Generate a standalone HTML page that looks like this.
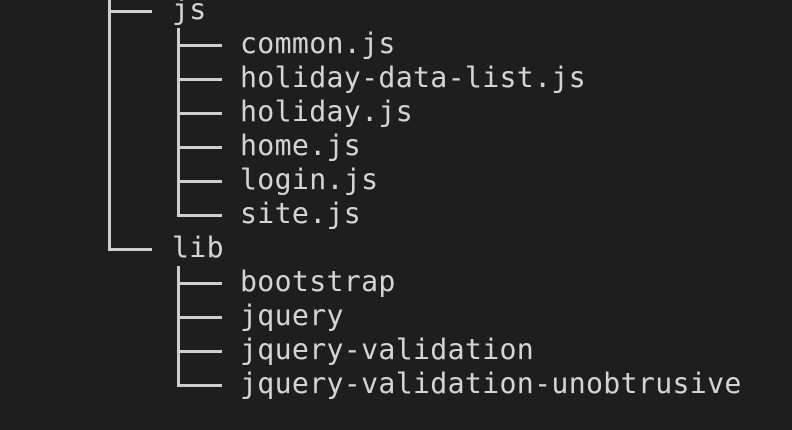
<!DOCTYPE html>
<html><head><style>
html,body{margin:0;padding:0;background:#1e1e1e;width:792px;height:430px;overflow:hidden}
.t{position:absolute;font-family:"DejaVu Sans Mono","Liberation Mono",monospace;font-size:28.2px;line-height:34px;color:#d4d4d4;white-space:pre;letter-spacing:0.33px;margin-top:-1px}
.l{position:absolute;background:#cfcfcf}
</style></head><body>
<div class="l" style="left:108px;top:0;width:2.5px;height:250px"></div>
<div class="l" style="left:108px;top:10px;width:44px;height:2.5px"></div>
<div class="l" style="left:108px;top:248px;width:44px;height:2.5px"></div>
<div class="l" style="left:177px;top:28px;width:2.5px;height:189px"></div>
<div class="l" style="left:177px;top:266px;width:2.5px;height:121px"></div>
<div class="l" style="left:177px;top:44px;width:45px;height:2.5px"></div>
<div class="l" style="left:177px;top:78px;width:45px;height:2.5px"></div>
<div class="l" style="left:177px;top:112px;width:45px;height:2.5px"></div>
<div class="l" style="left:177px;top:146px;width:45px;height:2.5px"></div>
<div class="l" style="left:177px;top:180px;width:45px;height:2.5px"></div>
<div class="l" style="left:177px;top:214px;width:45px;height:2.5px"></div>
<div class="l" style="left:177px;top:282px;width:45px;height:2.5px"></div>
<div class="l" style="left:177px;top:316px;width:45px;height:2.5px"></div>
<div class="l" style="left:177px;top:350px;width:45px;height:2.5px"></div>
<div class="l" style="left:177px;top:384px;width:45px;height:2.5px"></div>
<div class="t" style="left:172px;top:-6px">js</div>
<div class="t" style="left:240px;top:28px">common.js</div>
<div class="t" style="left:240px;top:62px">holiday-data-list.js</div>
<div class="t" style="left:240px;top:96px">holiday.js</div>
<div class="t" style="left:240px;top:130px">home.js</div>
<div class="t" style="left:240px;top:164px">login.js</div>
<div class="t" style="left:240px;top:198px">site.js</div>
<div class="t" style="left:172px;top:232px">lib</div>
<div class="t" style="left:240px;top:266px">bootstrap</div>
<div class="t" style="left:240px;top:300px">jquery</div>
<div class="t" style="left:240px;top:334px">jquery-validation</div>
<div class="t" style="left:240px;top:368px">jquery-validation-unobtrusive</div>
</body></html>
